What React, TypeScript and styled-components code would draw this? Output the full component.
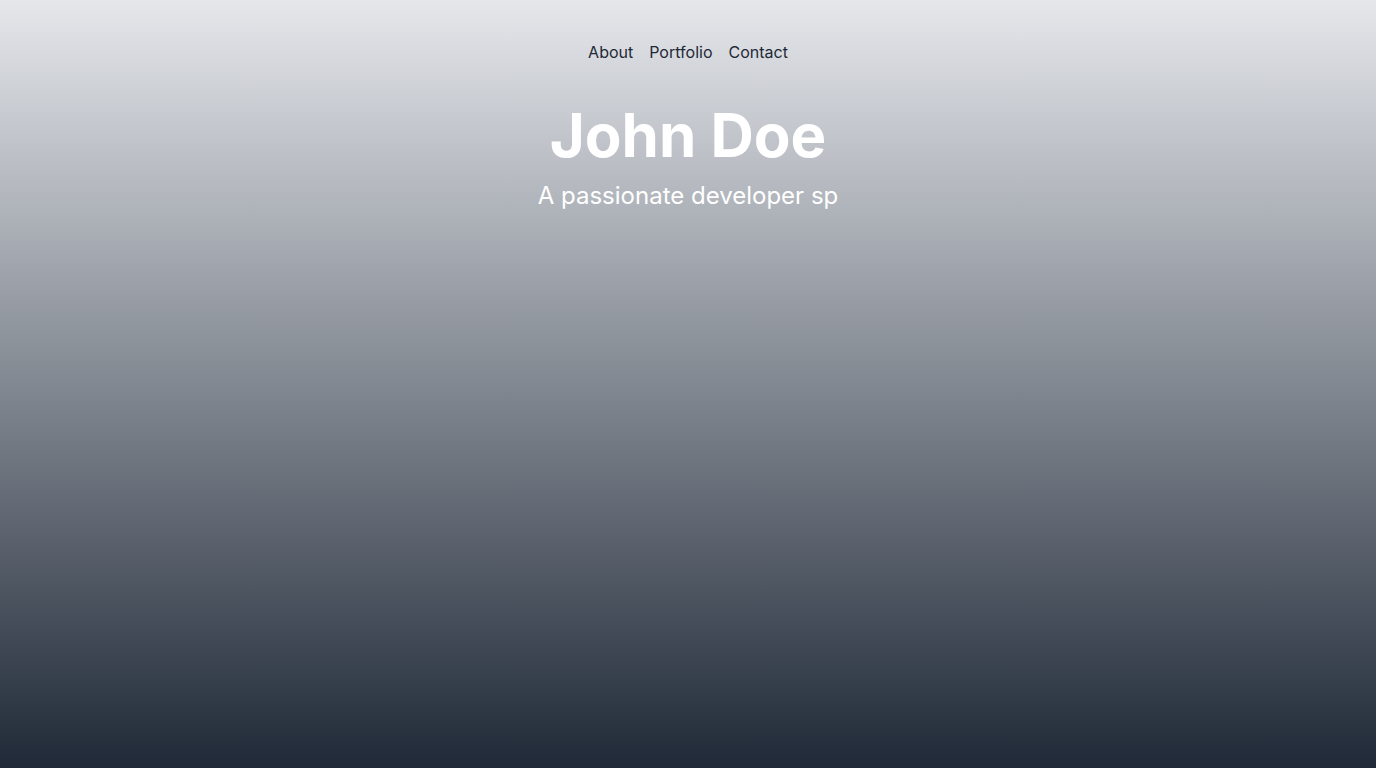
import styled, { createGlobalStyle } from "styled-components";

const GlobalStyle = createGlobalStyle`
    html, body {
        margin: 0;
        padding: 0;
    }
    body {
        font-family: Inter, "Noto Sans", sans-serif;
    }
`;

const Page = styled.div`
    min-height: 100vh;
    background: linear-gradient(to bottom, #e5e7eb, #1f2937);
    display: flex;
    flex-direction: column;
    align-items: center;
`;

const Nav = styled.nav`
    display: flex;
    justify-content: center;
    gap: 16px;
    padding: 40px 0 24px;
`;

const NavLink = styled.a`
    color: #1f2937;
    font-size: 16px;
    line-height: 24px;
    text-decoration: none;
`;

const Hero = styled.header`
    text-align: center;
    padding-top: 17px;
`;

const Name = styled.h1`
    margin: 0 0 15px;
    color: #ffffff;
    font-size: 60px;
    line-height: 1;
    font-weight: 700;
`;

const Tagline = styled.p`
    margin: 0;
    color: #ffffff;
    font-size: 24px;
    line-height: 32px;
`;

const App = () => {
    const links = ["About", "Portfolio", "Contact"];

    return (
        <>
            <GlobalStyle />
            <Page>
                <Nav>
                    {links.map((l) => (
                        <NavLink key={l} href={`#${l.toLowerCase()}`}>
                            {l}
                        </NavLink>
                    ))}
                </Nav>
                <Hero>
                    <Name>John Doe</Name>
                    <Tagline>A passionate developer sp</Tagline>
                </Hero>
            </Page>
        </>
    );
};

export default App;
